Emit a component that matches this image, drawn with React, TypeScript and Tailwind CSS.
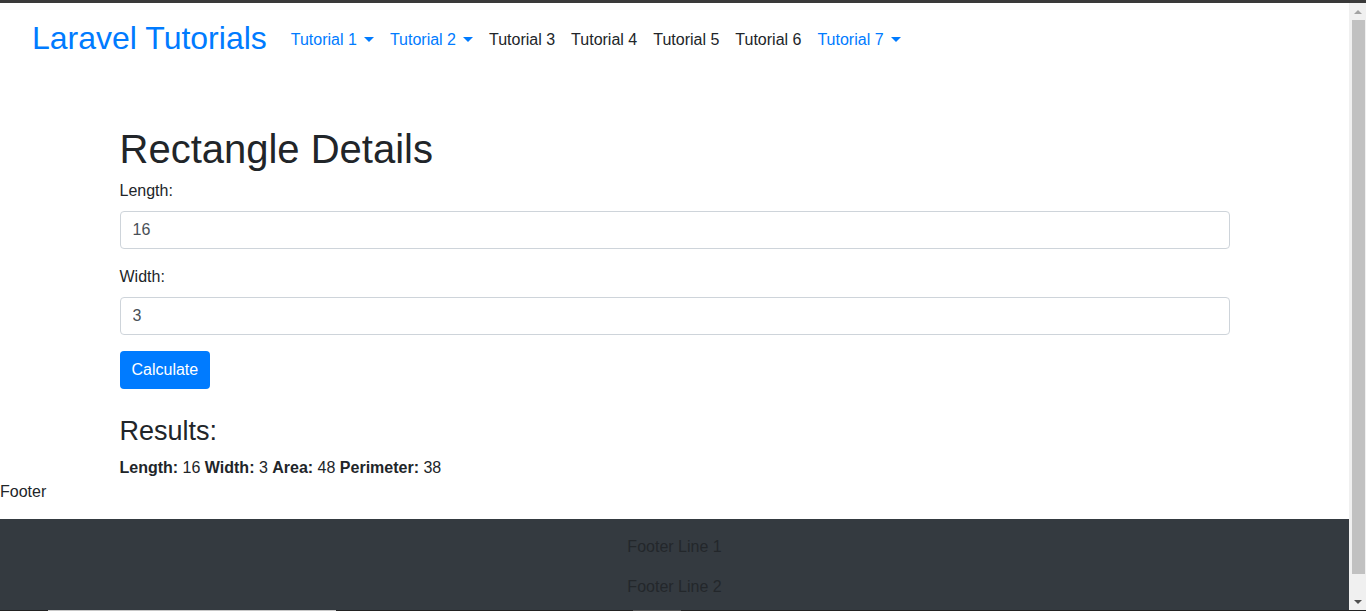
import React from 'react';

const Caret: React.FC = () => (
  <span className="ml-[7px] inline-block align-[3px] border-x-[5px] border-t-[5px] border-x-transparent border-t-current" />
);

const NAV = [
  { label: 'Tutorial 1', dropdown: true },
  { label: 'Tutorial 2', dropdown: true },
  { label: 'Tutorial 3', dropdown: false },
  { label: 'Tutorial 4', dropdown: false },
  { label: 'Tutorial 5', dropdown: false },
  { label: 'Tutorial 6', dropdown: false },
  { label: 'Tutorial 7', dropdown: true },
];

const App: React.FC = () => {
  return (
    <div className="relative flex h-[611px] w-[1366px] flex-col overflow-hidden bg-white font-['Liberation_Sans',sans-serif] text-[#212529]">
      {/* window edge */}
      <div className="h-[3px] shrink-0 bg-[#3a3a3a]" />

      <div className="flex min-h-0 flex-1">
        <div className="flex min-w-0 flex-1 flex-col overflow-hidden">
          {/* Navbar */}
          <nav className="flex h-[70px] shrink-0 items-center px-8">
            <a className="mr-4 text-[32px] leading-[48px] text-[#007bff]">Laravel Tutorials</a>
            <ul className="flex items-center pt-[4px]">
              {NAV.map(n => (
                <li key={n.label}>
                  <a className={`px-2 text-base leading-6 ${n.dropdown ? 'text-[#007bff]' : 'text-[#212529]'}`}>
                    {n.label}
                    {n.dropdown && <Caret />}
                  </a>
                </li>
              ))}
            </ul>
          </nav>

          {/* Content */}
          <div className="mx-auto mt-[50px] w-[1110px] shrink-0">
            <h1 className="mb-[6px] pt-[2px] text-[40px] font-medium leading-[48px]">Rectangle Details</h1>
            <div className="mb-4">
              <label className="mb-2 block text-base leading-6">Length:</label>
              <input
                className="h-[38px] w-full rounded border border-[#ced4da] px-3 text-base text-[#495057] outline-none"
                defaultValue="16"
              />
            </div>
            <div className="mb-4">
              <label className="mb-2 block text-base leading-6">Width:</label>
              <input
                className="h-[38px] w-full rounded border border-[#ced4da] px-3 text-base text-[#495057] outline-none"
                defaultValue="3"
              />
            </div>
            <button className="h-[38px] rounded bg-[#007bff] px-3 text-base text-white">Calculate</button>

            <h3 className="mb-2 mt-[25px] text-[27px] font-medium leading-[34px]">Results:</h3>
            <p className="text-base leading-6">
              <b>Length:</b> 16 <b>Width:</b> 3 <b>Area:</b> 48 <b>Perimeter:</b> 38
            </p>
          </div>

          <p className="mb-[15px] shrink-0 text-base leading-6">Footer</p>

          {/* Footer */}
          <footer className="flex-1 shrink-0 bg-[#343a40] pt-4 text-center text-base leading-6 text-[#23272b]">
            <p className="mb-4">Footer Line 1</p>
            <p className="mb-4">Footer Line 2</p>
          </footer>
        </div>

        {/* Scrollbar */}
        <div className="flex w-[17px] flex-col items-center bg-[#f0f0f0]">
          <div className="flex h-[17px] w-full items-center justify-center">
            <span className="border-x-[4px] border-b-[4px] border-x-transparent border-b-[#a3a3a3]" />
          </div>
          <div className="ml-[1px] w-[13px] flex-1 bg-[#c1c1c1]" />
          <div className="h-[19px]" />
          <div className="flex h-[17px] w-full items-center justify-center">
            <span className="border-x-[4px] border-t-[4px] border-x-transparent border-t-[#505050]" />
          </div>
        </div>
      </div>

      {/* bottom edge */}
      <div className="flex h-[1px] shrink-0 bg-[#222]">
        <div className="ml-[48px] w-[288px] bg-[#c8c8c8]" />
        <div className="ml-[297px] w-[48px] bg-[#555]" />
      </div>
    </div>
  );
};

export default App;
